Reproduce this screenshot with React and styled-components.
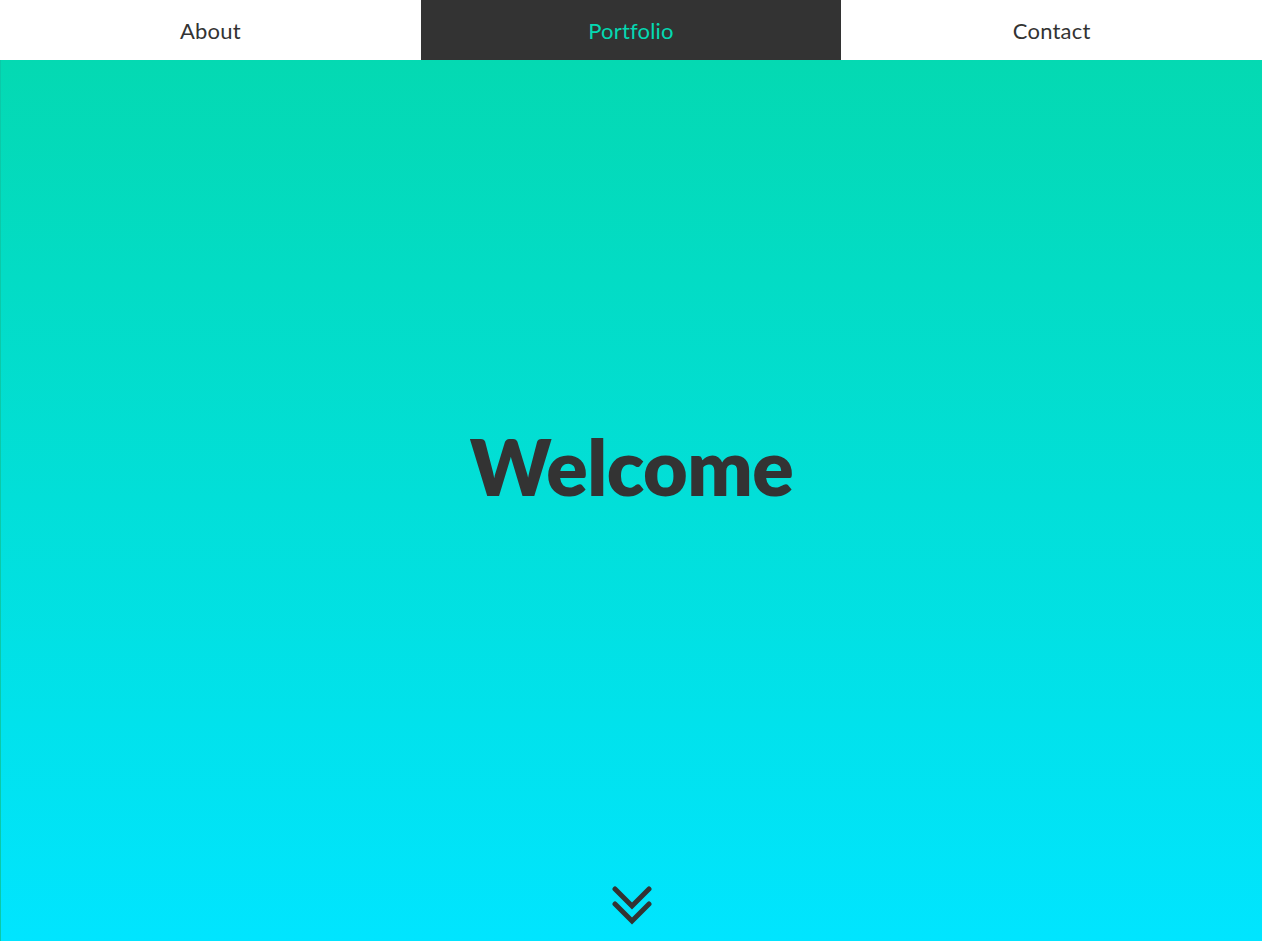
import styled, { createGlobalStyle } from "styled-components";

const Global = createGlobalStyle`
  html, body { margin: 0; padding: 0; }
  body { font-family: Lato, "Open Sans", sans-serif; color: #333; }
`;

const Nav = styled.nav`
  position: fixed;
  top: 0;
  left: 0;
  right: 0;
  height: 60px;
  display: grid;
  grid-template-columns: repeat(3, 1fr);
  background: #fff;
  z-index: 2;
`;

const NavItem = styled.a`
  display: flex;
  align-items: center;
  justify-content: center;
  font-size: 22px;
  letter-spacing: 0.2px;
  text-decoration: none;
  background: ${({ active }) => (active ? "#333" : "transparent")};
  color: ${({ active }) => (active ? "#04d9b2" : "#333")};
  cursor: pointer;
`;

const Hero = styled.section`
  height: 100vh;
  box-sizing: border-box;
  border-left: 1px solid #0bc9a8;
  background: linear-gradient(to bottom, #04d9b2 60px, #00e5ff 100%);
  display: flex;
  flex-direction: column;
  align-items: center;
  justify-content: center;
  position: relative;
`;

const Title = styled.h1`
  margin: 0 0 10px;
  font-size: 77px;
  font-weight: 800;
  color: #333;
  letter-spacing: -0.5px;
`;

const Scroll = styled.div`
  position: absolute;
  bottom: 15px;
  left: 50%;
  transform: translateX(-50%);
  width: 40px;
  height: 40px;
`;

export default function App() {
  return (
    <>
      <Global />
      <Nav>
        <NavItem>About</NavItem>
        <NavItem active>Portfolio</NavItem>
        <NavItem>Contact</NavItem>
      </Nav>
      <Hero>
        <Title>Welcome</Title>
        <Scroll>
          <svg width="40" height="40" viewBox="0 0 40 40" fill="none" stroke="#333" strokeWidth="5" strokeLinecap="round" strokeLinejoin="miter">
            <path d="M3 3 L20 20 L37 3" />
            <path d="M3 18 L20 35 L37 18" />
          </svg>
        </Scroll>
      </Hero>
    </>
  );
}
